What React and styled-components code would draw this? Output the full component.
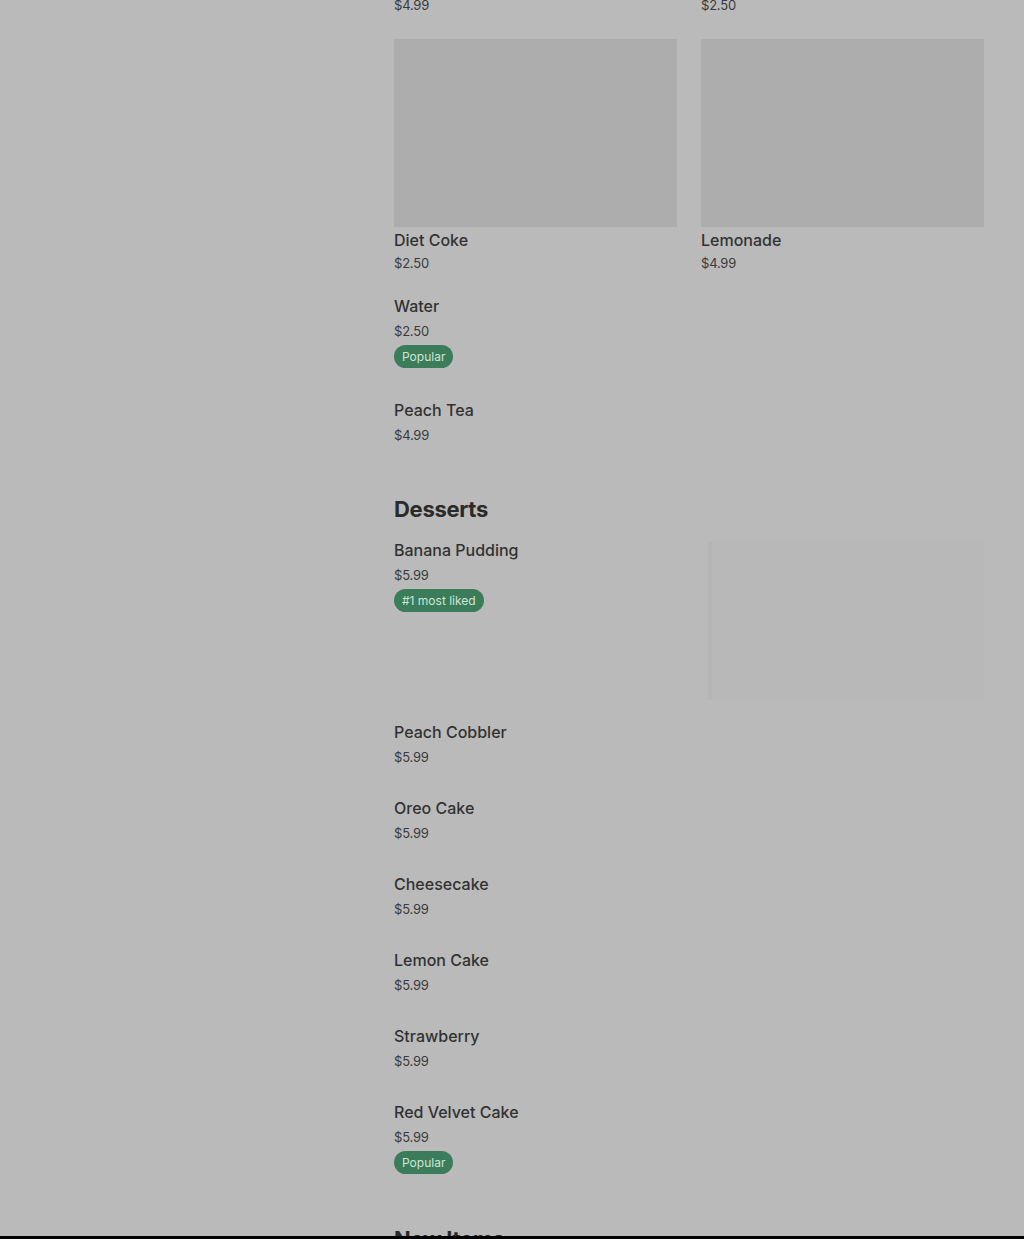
import React from "react";
import styled, { createGlobalStyle } from "styled-components";

const Global = createGlobalStyle`
  html, body { margin: 0; padding: 0; height: 100%; }
  body {
    background: #bababa;
    font-family: Inter, "Noto Sans", Roboto, sans-serif;
    overflow: hidden;
  }
  #root { height: 100%; }
`;

const Page = styled.div`
  height: 100vh;
  display: flex;
  flex-direction: column;
  background: #bababa;
`;

const Viewport = styled.div`
  flex: 1;
  overflow: hidden;
  display: flex;
  justify-content: flex-start;
  padding-left: 394px;
`;

const Menu = styled.main`
  width: 590px;
  margin-top: -219px;
  display: flex;
  flex-direction: column;
`;

const FooterEdge = styled.div`
  height: 3px;
  background: #000;
  flex: none;
`;

const CardGrid = styled.div`
  display: grid;
  grid-template-columns: 283px 283px;
  column-gap: 24px;
  row-gap: 23px;
  margin-bottom: 20px;
`;

const Card = styled.div`
  display: flex;
  flex-direction: column;
`;

const Photo = styled.div`
  height: 188px;
  background: #adadad;
  margin-bottom: 1px;
`;

const Name = styled.div`
  font-size: 16px;
  line-height: 24px;
  color: #323232;
  font-weight: 450;
`;

const Price = styled.div`
  font-size: 13px;
  line-height: 22px;
  margin-top: ${(p) => (p.$card ? "0" : "2px")};
  color: #3a3a3a;
  letter-spacing: -0.2px;
`;

const Badge = styled.span`
  align-self: flex-start;
  display: inline-flex;
  align-items: center;
  height: 23px;
  padding: 0 8px;
  margin: 3px 0 2px;
  border-radius: 12px;
  background: #3b7d5b;
  color: #cfe4d7;
  font-size: 12px;
`;

const List = styled.div`
  display: flex;
  flex-direction: column;
`;

const Row = styled.div`
  display: grid;
  grid-template-columns: 283px 283px;
  column-gap: 24px;
  margin-bottom: ${(p) => (p.$tight ? "20px" : "28px")};
`;

const RowText = styled.div`
  display: flex;
  flex-direction: column;
`;

const FadedPhoto = styled.div`
  margin-top: 3px;
  margin-left: 7px;
  height: 159px;
  background: #b8b8b8;
  border-left: 4px solid #b5b5b5;
`;

const SectionTitle = styled.h2`
  margin: 20px 0 14px;
  font-size: 22px;
  line-height: 30px;
  font-weight: 700;
  color: #2a2a2a;
  letter-spacing: -0.3px;
`;

const cards = [
  { name: "Sweet Tea", price: "$4.99" },
  { name: "Coke", price: "$2.50" },
  { name: "Diet Coke", price: "$2.50" },
  { name: "Lemonade", price: "$4.99" },
];

const drinks = [
  { name: "Water", price: "$2.50", badge: "Popular" },
  { name: "Peach Tea", price: "$4.99" },
];

const desserts = [
  { name: "Banana Pudding", price: "$5.99", badge: "#1 most liked", photo: true },
  { name: "Peach Cobbler", price: "$5.99" },
  { name: "Oreo Cake", price: "$5.99" },
  { name: "Cheesecake", price: "$5.99" },
  { name: "Lemon Cake", price: "$5.99" },
  { name: "Strawberry", price: "$5.99" },
  { name: "Red Velvet Cake", price: "$5.99", badge: "Popular" },
];

function ItemRow({ item }) {
  return (
    <Row $tight={item.photo}>
      <RowText>
        <Name>{item.name}</Name>
        <Price>{item.price}</Price>
        {item.badge && <Badge>{item.badge}</Badge>}
      </RowText>
      {item.photo && <FadedPhoto />}
    </Row>
  );
}

export default function App() {
  return (
    <Page>
      <Global />
      <Viewport>
        <Menu>
          <CardGrid>
            {cards.map((c) => (
              <Card key={c.name}>
                <Photo />
                <Name>{c.name}</Name>
                <Price $card>{c.price}</Price>
              </Card>
            ))}
          </CardGrid>
          <List>
            {drinks.map((d) => (
              <ItemRow key={d.name} item={d} />
            ))}
          </List>
          <SectionTitle>Desserts</SectionTitle>
          <List>
            {desserts.map((d) => (
              <ItemRow key={d.name} item={d} />
            ))}
          </List>
          <SectionTitle>New Items</SectionTitle>
        </Menu>
      </Viewport>
      <FooterEdge />
    </Page>
  );
}
